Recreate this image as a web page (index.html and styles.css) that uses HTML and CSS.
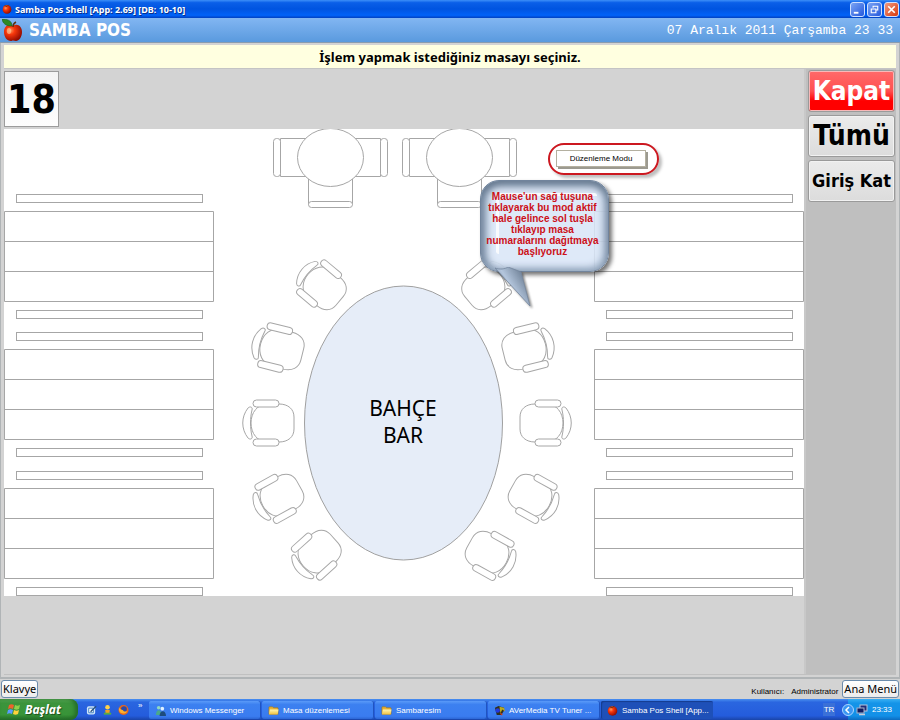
FILE: index.html
```html
<!DOCTYPE html>
<html lang="tr">
<head>
    <meta charset="UTF-8">
    <meta name="viewport" content="width=device-width, initial-scale=1.0">
    <title>Samba Pos Shell</title>
    <link rel="stylesheet" href="styles.css">
</head>
<body>
    <!-- shared shapes -->
    <svg class="defs" width="0" height="0" aria-hidden="true">
        <defs>
            <radialGradient id="red" cx="35%" cy="35%" r="70%">
                <stop offset="0" stop-color="#ff9a5c"/>
                <stop offset="0.35" stop-color="#f8380c"/>
                <stop offset="1" stop-color="#8e0a00"/>
            </radialGradient>
            <linearGradient id="folderFill" x1="0" y1="0" x2="0" y2="1">
                <stop offset="0" stop-color="#fff6b0"/>
                <stop offset="1" stop-color="#f0bf3c"/>
            </linearGradient>
            <symbol id="apple" viewBox="0 0 20 23">
                <path d="M11 7C7 4 2 7 2 13c0 5 3 9 7 9 1 0 1-.5 2-.5s2 .5 3 .5c3 0 6-4 6-9 0-6-5-9-9-6z" fill="url(#red)"/>
                <path d="M11 8c0-2 1-4 3-5" fill="none" stroke="#5c3010" stroke-width="1.400"/>
                <path d="M10 7C8 7 1 7 0 0c6 0 10 2 10 7z" fill="#2f8a26" stroke="#1c5c1c" stroke-width="0.600"/>
                <ellipse cx="7" cy="12" rx="2.200" ry="3" fill="#ffc9a0" opacity="0.600"/>
            </symbol>
            <symbol id="tomato" viewBox="0 0 12 12">
                <circle cx="6" cy="6.500" r="5.200" fill="url(#red)"/>
                <path d="M3 2l3 1 2-2" fill="none" stroke="#5a3a10"/>
            </symbol>
            <symbol id="folder" viewBox="0 0 12 10">
                <path d="M1 2c0-1 0-1 1-1h3l1 1h4c1 0 1 0 1 1v6H1z" fill="#e8b238" stroke="#9b6f14" stroke-width="0.600"/>
                <path d="M2 4h9.500L10.500 9.400H1z" fill="url(#folderFill)"/>
            </symbol>
            <g id="chair">
                <path d="M9-19C18-19 24-14 24-6V6C24 14 18 19 9 19H-2C-13 19-19 10-19 0S-13-19-2-19z"/>
                <rect x="-17" y="-23" width="26" height="7" rx="3.500"/>
                <rect x="-17" y="16" width="26" height="7" rx="3.500"/>
                <path d="M-22-15C-20-17-17-16-18-13-20-5-20 5-18 13-17 16-20 17-22 15-29 6-29-6-22-15z"/>
            </g>
            <g id="roundTable">
                <path d="M-50-19H50V19H-50zM-22 15V47H22V15z"/>
                <rect x="-57" y="-19" width="7" height="38" rx="3"/>
                <rect x="50" y="-19" width="7" height="38" rx="3"/>
                <rect x="-22" y="44" width="44" height="6" rx="3"/>
                <ellipse rx="33" ry="29"/>
            </g>
            <g id="sideRow">
                <rect x="12" y="0" width="186" height="8"/>
                <path d="M0 17H209V107H0zM0 47H209M0 77H209"/>
                <rect x="12" y="116" width="186" height="8"/>
            </g>
        </defs>
    </svg>

    <div class="titlebar">
        <svg class="title-icon" aria-hidden="true"><use href="#tomato"/></svg>
        <span class="title-text">Samba Pos Shell [App: 2.69] [DB: 10-10]</span>
        <div class="window-buttons">
            <button class="win-btn" aria-label="Simge durumuna küçült">
                <svg viewBox="0 0 14 14"><path d="M3 10.500h5" stroke="#fff" stroke-width="2"/></svg>
            </button>
            <button class="win-btn" aria-label="Önceki boyut">
                <svg viewBox="0 0 14 14"><path d="M5.500 5V3.500h5v4H9M3.500 6.500h5v4h-5z" fill="none" stroke="#fff" stroke-width="1.200"/></svg>
            </button>
            <button class="win-btn close" aria-label="Kapat">
                <svg viewBox="0 0 14 14"><path d="M3.500 3.500l7 7M10.500 3.500l-7 7" stroke="#fff" stroke-width="1.800"/></svg>
            </button>
        </div>
    </div>

    <header class="header">
        <svg class="logo" aria-hidden="true"><use href="#apple"/></svg>
        <h1>SAMBA POS</h1>
        <span class="clock">07 Aralık 2011 Çarşamba 23 33</span>
    </header>

    <main class="content">
        <div class="message">İşlem yapmak istediğiniz masayı seçiniz.</div>
        <div class="workspace">
            <section class="tables">
                <button class="table-btn">18</button>
                <div class="plan">
                    <svg class="plan-drawing" viewBox="4 129 800 467">
                        <g class="outline">
                            <use href="#sideRow" x="4.500" y="194.500"/>
                            <use href="#sideRow" x="4.500" y="332.500"/>
                            <use href="#sideRow" x="4.500" y="471.500"/>
                            <use href="#sideRow" x="594.500" y="194.500"/>
                            <use href="#sideRow" x="594.500" y="332.500"/>
                            <use href="#sideRow" x="594.500" y="471.500"/>

                            <use href="#roundTable" x="330.500" y="157.500"/>
                            <use href="#roundTable" x="459.500" y="157.500"/>

                            <use href="#chair" transform="translate(322 286) rotate(40) scale(0.96)"/>
                            <use href="#chair" transform="translate(279 348.500) rotate(14)"/>
                            <use href="#chair" transform="translate(270 423)"/>
                            <use href="#chair" transform="translate(279 497) rotate(-29) scale(0.97)"/>
                            <use href="#chair" transform="translate(317 554) rotate(-42) scale(0.96)"/>

                            <use href="#chair" transform="translate(486 286) scale(-1 1) rotate(40) scale(0.96)"/>
                            <use href="#chair" transform="translate(527 348.500) scale(-1 1) rotate(14)"/>
                            <use href="#chair" transform="translate(544 423) scale(-1 1)"/>
                            <use href="#chair" transform="translate(533 497) scale(-1 1) rotate(-29) scale(0.97)"/>
                            <use href="#chair" transform="translate(490 554) scale(-1 1) rotate(-29) scale(0.97)"/>
                        </g>
                        <ellipse class="bar" cx="403.500" cy="423" rx="99" ry="137"/>
                        <text class="bar-label" x="403" y="416">BAHÇE</text>
                        <text class="bar-label" x="403" y="443">BAR</text>
                    </svg>

                    <div class="menu-ring">
                        <button class="menu-item">Düzenleme Modu</button>
                    </div>

                    <div class="balloon">
                        <svg class="balloon-tail" viewBox="0 0 42 40" aria-hidden="true">
                            <defs>
                                <linearGradient id="tailFill" x1="0" y1="1" x2="1" y2="0.300">
                                    <stop offset="0.200" stop-color="#66788f"/>
                                    <stop offset="0.550" stop-color="#b4c6dd"/>
                                    <stop offset="1" stop-color="#65778c"/>
                                </linearGradient>
                            </defs>
                            <path d="M0 1C5 3 10 2 13 0L26 5L35 39z" fill="url(#tailFill)" stroke="#7688a0" stroke-width="0.800"/>
                        </svg>
                        <p>Mause'un sağ tuşuna<br>tıklayarak bu mod aktif<br>hale gelince sol tuşla<br>tıklayıp masa<br>numaralarını dağıtmaya<br>başlıyoruz</p>
                    </div>
                </div>
            </section>

            <nav class="sidebar">
                <button class="side-btn danger">Kapat</button>
                <button class="side-btn">Tümü</button>
                <button class="side-btn small">Giriş Kat</button>
            </nav>
        </div>
    </main>

    <footer class="statusbar">
        <button class="status-btn">Klavye</button>
        <div class="user"><span>Kullanıcı:</span><span>Administrator</span></div>
        <button class="status-btn">Ana Menü</button>
    </footer>

    <div class="taskbar">
        <button class="start">
            <svg viewBox="0 0 14 13" aria-hidden="true">
                <path d="M2 2c2-1 3-1 5 0L6 6C4 5 3 5 1 6z" fill="#f0622c"/>
                <path d="M8 2c2 1 3 1 5 0l-1 4c-2 1-3 1-5 0z" fill="#8fd14a"/>
                <path d="M1 7c2-1 3-1 5 0l-1 4C3 10 2 10 0 11z" fill="#5a9bff"/>
                <path d="M7 7c2 1 3 1 5 0l-1 4c-2 1-3 1-5 0z" fill="#ffd23c"/>
            </svg>
            Başlat
        </button>
        <div class="quick">
            <button aria-label="Masaüstü">
                <svg viewBox="0 0 12 12"><rect x="1" y="2" width="9" height="9" rx="2" fill="#cfe6fa"/><path d="M3 4h5v5H3z" fill="#fff" stroke="#3a7cc0"/><path d="M5 8l6-6" stroke="#27507c" stroke-width="1.500"/></svg>
            </button>
            <button aria-label="Messenger">
                <svg viewBox="0 0 12 12"><circle cx="6" cy="3" r="2.500" fill="#ffd24a"/><path d="M3.500 6h5L8 10H4z" fill="#f0a020"/><path d="M2 9h8v2H2z" fill="#57ae42"/></svg>
            </button>
            <button aria-label="Firefox">
                <svg viewBox="0 0 12 12"><circle cx="6" cy="6" r="5.500" fill="#e8661a"/><circle cx="6.500" cy="5" r="3.200" fill="#2b4aa8"/><path d="M1 3c1 3 4 2 5 4 1 1 3 1 4 0-1 4-8 4-9-1z" fill="#ffb02e"/></svg>
            </button>
            <span class="more">»</span>
        </div>
        <div class="tasks">
            <button class="task">
                <svg viewBox="0 0 12 12" aria-hidden="true"><circle cx="4" cy="3" r="2" fill="#8fd8c0"/><path d="M1 11c0-7 6-7 6 0z" fill="#4aa88c"/><circle cx="8" cy="4" r="2" fill="#dff0ff"/><path d="M5 12c0-7 7-7 7 0z" fill="#1e4c7c"/></svg>
                <span>Windows Messenger</span>
            </button>
            <button class="task"><svg aria-hidden="true"><use href="#folder"/></svg><span>Masa düzenlemesi</span></button>
            <button class="task"><svg aria-hidden="true"><use href="#folder"/></svg><span>Sambaresim</span></button>
            <button class="task">
                <svg viewBox="0 0 12 12" aria-hidden="true"><path d="M1 3l4-2 6 2v3l-3 5H3z" fill="#30301c"/><circle cx="4" cy="6" r="2.500" fill="#2038e0"/><path d="M6 2l5 1 1 4-3-2-2 4z" fill="#b8a820"/><path d="M7 9l2 2" stroke="#d04020" stroke-width="1.500"/></svg>
                <span>AVerMedia TV Tuner ...</span>
            </button>
            <button class="task active"><svg aria-hidden="true"><use href="#tomato"/></svg><span>Samba Pos Shell [App...</span></button>
        </div>
        <button class="lang">TR</button>
        <div class="tray">
            <button class="tray-toggle" aria-label="Gizli simgeleri göster">
                <svg viewBox="0 0 12 12"><circle cx="6" cy="6" r="5.500" fill="#3a96f2" stroke="#a9d6ff"/><path d="M7 3L4 6l3 3" fill="none" stroke="#fff" stroke-width="1.500"/></svg>
            </button>
            <svg class="net" viewBox="0 0 12 12" aria-hidden="true"><rect x="4" y="1" width="7" height="6" fill="#202c78" stroke="#b8c4dc"/><rect x="1" y="4" width="7" height="5" fill="#101c60" stroke="#a8b4cc"/><path d="M3 10.500h6" stroke="#c8ccd8" stroke-width="1.500"/></svg>
            <span>23:33</span>
        </div>
    </div>
</body>
</html>
```
FILE: styles.css
```css
* {
    box-sizing: border-box;
}
body {
    display: flex;
    flex-direction: column;
    min-height: 100vh;
    margin: 0;
    background: #d3d3d3;
    color: #000;
    font-family: "DejaVu Sans Condensed", "DejaVu Sans", sans-serif;
}
button {
    padding: 0;
    border: none;
    background: none;
    color: inherit;
    font: inherit;
    cursor: pointer;
}
.defs {
    position: absolute;
}

/* window title */
.titlebar {
    display: flex;
    align-items: center;
    gap: 3px;
    height: 18px;
    padding: 0 1px 0 2px;
    background: linear-gradient(#3d8ff8 0, #0a5fe8 15%, #0054e0 50%, #0062f8 85%, #0040c0 100%);
    color: #fff;
}
.title-icon {
    width: 10px;
    height: 12px;
}
.title-text {
    font-family: "Noto Sans", sans-serif;
    font-size: 9px;
    font-weight: bold;
    text-shadow: 1px 1px 0 #08308c;
}
.window-buttons {
    display: flex;
    gap: 2px;
    margin-left: auto;
}
.win-btn {
    width: 15px;
    height: 15px;
    border: 1px solid #cfe0ff;
    border-radius: 3px;
    background: linear-gradient(135deg, #7ba4f4, #2458dc);
}
.win-btn svg {
    display: block;
}
.win-btn.close {
    background: linear-gradient(135deg, #f09a80, #d8380c);
}

/* application header */
.header {
    display: flex;
    align-items: center;
    height: 25px;
    padding: 0 7px 0 2px;
    border-bottom: 1px solid #8a9cae;
    background: linear-gradient(#82b6f2, #5a9ade);
    color: #fff;
}
.logo {
    width: 20px;
    height: 23px;
}
.header h1 {
    margin: 0 0 0 7px;
    font-size: 17px;
    line-height: 24px;
}
.clock {
    margin-left: auto;
    font-family: "Liberation Mono", monospace;
    font-size: 13px;
}

.content {
    display: flex;
    flex: 1;
    flex-direction: column;
    padding: 2px 3px;
    border: 1px solid #b0b4b6;
    border-top: none;
    border-bottom-width: 2px;
}
.message {
    height: 24px;
    border-bottom: 1px solid #c4c4c4;
    background: #ffffe0;
    font-family: "Noto Sans", sans-serif;
    font-size: 13px;
    font-weight: bold;
    line-height: 24px;
    text-align: center;
}
.workspace {
    display: flex;
    flex: 1;
    border-bottom: 1px solid #c0c0c0;
}
.tables {
    flex: 1;
    padding-top: 2px;
}
.table-btn {
    display: block;
    width: 55px;
    height: 56px;
    margin-bottom: 2px;
    border: 1px solid #9c9c9c;
    background: linear-gradient(#f4f4f4, #fdfdfd);
    font-size: 39px;
    font-weight: bold;
}
.plan {
    position: relative;
    background: #fff;
}
.plan-drawing {
    display: block;
    width: 100%;
}
.outline {
    fill: #fff;
    stroke: #a6a6a6;
    stroke-width: 1;
}
.bar {
    fill: #e6edf8;
    stroke: #a0a0a0;
}
.bar-label {
    font-family: "Noto Sans", sans-serif;
    font-size: 21px;
    text-anchor: middle;
}

/* context menu with its highlight */
.menu-ring {
    position: absolute;
    top: 3%;
    left: 68%;
    padding: 5px 11px 6px 6px;
    border: 2px solid #cc1820;
    border-radius: 16px;
    box-shadow: 3px 3px 3px rgba(0, 0, 0, 0.25);
}
.menu-item {
    display: block;
    width: 90px;
    height: 17px;
    border: 1px solid #b4b0a0;
    background: #fff;
    box-shadow: 2px 2px 0 #9c9a90;
    font-family: "Liberation Sans", Arial, sans-serif;
    font-size: 8px;
}

.balloon {
    position: absolute;
    top: 11%;
    left: 59.5%;
    width: 129px;
    height: 92px;
    padding: 10px 4px 0 0;
    border: 1px solid #71849c;
    border-radius: 19px;
    background: rgba(217, 230, 247, 0.88);
    box-shadow: inset 0 5px 8px #66798f, inset -4px -2px 8px #9cafc6, inset 5px 0 9px #8094ac, 3px 3px 4px rgba(0, 0, 0, 0.55);
}
.balloon::before {
    content: "";
    position: absolute;
    top: 12px;
    left: 15px;
    width: 98px;
    height: 58px;
    border-top: 3px solid #fff;
    border-left: 3px solid #fff;
    border-radius: 3px;
    opacity: 0.8;
}
.balloon-tail {
    position: absolute;
    top: 86px;
    left: 14px;
    width: 42px;
    height: 40px;
    filter: drop-shadow(2px 2px 1px rgba(0, 0, 0, 0.45));
}
.balloon p {
    position: relative;
    margin: 0;
    color: #cc1018;
    font-family: "Liberation Sans", Arial, sans-serif;
    font-size: 10px;
    font-weight: bold;
    line-height: 11px;
    text-align: center;
    white-space: nowrap;
}

/* right column */
.sidebar {
    display: flex;
    flex-direction: column;
    gap: 3px;
    width: 92px;
    padding: 1px 1px 0 2px;
    border-left: 2px solid #c8c8c8;
    background: #bfbfbf;
}
.side-btn {
    height: 42px;
    border: 1px solid #9a9a9a;
    border-radius: 3px;
    background: linear-gradient(#ebebeb, #dcdcdc);
    box-shadow: inset 0 0 0 1px #f2f2f2;
    font-size: 28px;
    font-weight: bold;
    line-height: 40px;
    white-space: nowrap;
}
.side-btn.danger {
    background: linear-gradient(#ff6a6a 0, #ff5050 50%, #ff0000 75%);
    box-shadow: inset 0 0 0 1px #f8b8b8;
    color: #fff;
    font-size: 26px;
}
.side-btn.small {
    font-size: 18px;
}

.statusbar {
    display: flex;
    align-items: center;
    height: 20px;
    padding: 0 1px;
}
.status-btn {
    height: 18px;
    padding: 0 1px;
    border: 1px solid #6c8cac;
    border-radius: 3px;
    background: linear-gradient(#fff, #ececec);
    font-family: "Noto Sans", sans-serif;
    font-size: 11px;
    line-height: 16px;
}
.user {
    display: flex;
    gap: 7px;
    margin: 4px 4px 0 auto;
    font-family: "Liberation Sans", Arial, sans-serif;
    font-size: 8px;
}

/* taskbar */
.taskbar {
    display: flex;
    align-items: stretch;
    height: 21px;
    background: linear-gradient(#4a90f0 0, #2a66e0 15%, #245cdc 80%, #1a44a8 100%);
    color: #fff;
    font-family: "Liberation Sans", Arial, sans-serif;
    font-size: 8px;
}
.start {
    display: flex;
    align-items: center;
    gap: 4px;
    width: 78px;
    padding-left: 7px;
    border-radius: 0 8px 8px 0;
    background: linear-gradient(#5cae58 0, #3c943c 20%, #389438 75%, #246c28 100%);
    box-shadow: inset -3px 0 4px #246c28;
    font-family: "Noto Sans", sans-serif;
    font-size: 12px;
    font-style: italic;
    font-weight: bold;
    line-height: 18px;
    text-shadow: 1px 1px 1px #1c4c1c;
}
.start svg {
    width: 14px;
    height: 13px;
}
.quick {
    display: flex;
    align-items: center;
    gap: 5px;
    width: 71px;
    padding-left: 8px;
}
.quick svg {
    display: block;
    width: 11px;
    height: 12px;
}
.more {
    margin: 0 0 8px 4px;
}
.tasks {
    display: flex;
    flex: 1;
    gap: 1px;
    min-width: 0;
    padding: 2px 0 1px;
}
.task {
    display: flex;
    flex: 0 1 112px;
    align-items: center;
    gap: 4px;
    min-width: 0;
    padding: 0 2px 0 6px;
    border-radius: 2px;
    background: linear-gradient(#5a9af8 0, #3c80f0 20%, #3a7cf0 85%, #2c66d4 100%);
    box-shadow: inset -1px 0 0 #2054c0;
    white-space: nowrap;
}
.task svg {
    flex: none;
    width: 11px;
    height: 11px;
}
.task.active {
    background: #1e50b8;
    box-shadow: inset 1px 1px 1px #143c90;
}
.lang {
    width: 12px;
    margin: 4px 13px 4px 0;
    background: #3a70d8;
}
.tray {
    display: flex;
    align-items: center;
    gap: 2px;
    padding-right: 8px;
    background: linear-gradient(#38b0f4 0, #1494e8 20%, #1290e8 80%, #0c6cc0 100%);
}
.tray-toggle {
    margin-left: -6px;
}
.tray svg {
    display: block;
    width: 12px;
    height: 12px;
}
.tray span {
    margin-left: 2px;
}
```
